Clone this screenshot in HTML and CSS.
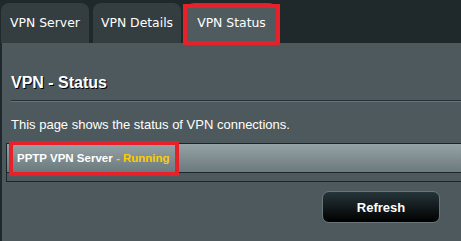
FILE: index.html
```html
<!DOCTYPE html>
<html lang="en">
<head>
    <meta charset="UTF-8">
    <title>VPN Status</title>
    <link rel="stylesheet" href="styles.css">
</head>
<body>
    <div class="tabs">
        <div class="tab">VPN Server</div>
        <div class="tab">VPN Details</div>
        <div class="tab active">VPN Status</div>
    </div>
    <div class="panel">
        <h2 class="title">VPN - Status</h2>
        <div class="divider"></div>
        <p class="desc">This page shows the status of VPN connections.</p>
        <div class="status-table">
            <div class="status-head">
                <span class="status-label">PPTP VPN Server <span class="running">- Running</span></span>
            </div>
            <div class="status-body"></div>
        </div>
        <div class="actions">
            <button class="refresh">Refresh</button>
        </div>
    </div>
</body>
</html>
```

FILE: styles.css
```css
html, body {
    margin: 0;
    height: 100%;
}

body {
    background-color: #1f292c;
    font-family: 'Liberation Sans', Arial, sans-serif;
    color: #fff;
    overflow: hidden;
}

.tabs {
    display: flex;
    gap: 4px;
    padding: 3px 0 0 1px;
    height: 40px;
}

.tab {
    position: relative;
    width: 88px;
    height: 40px;
    line-height: 40px;
    text-align: center;
    border-radius: 8px 8px 0 0;
    background-color: #343e41;
    font-family: 'DejaVu Sans', sans-serif;
    font-size: 12.4px;
    color: #fff;
}

.tab.active {
    width: 91px;
    margin-left: 1px;
    background-color: #4f5b5f;
}

/* red highlight box */
.tab.active::after {
    content: '';
    position: absolute;
    top: 1px;
    left: -3px;
    right: -3px;
    bottom: -2px;
    border: 4px solid #e8202a;
}

.panel {
    background-color: #4d595d;
    border-left: 2px solid #1f292c;
    height: 198px;
}

.title {
    margin: 0;
    padding: 30px 0 0 9px;
    font-size: 16px;
    line-height: 20px;
    font-weight: 700;
    text-shadow: 1px 1px 0 #000;
}

.divider {
    margin: 7px 0 0 9px;
    border-top: 1px solid #263135;
    border-bottom: 1px solid #66747a;
}

.desc {
    margin: 15px 0 0 9px;
    font-size: 13px;
    line-height: 16px;
}

.status-table {
    margin: 10px 0 0 4px;
    border: 1px solid #1c2528;
    border-right: none;
}

.status-head {
    display: flex;
    align-items: center;
    height: 28px;
    padding-left: 6px;
    background: linear-gradient(#95a2a6, #6b7a7e);
    border-bottom: 1px solid #1c2528;
}

.status-label {
    display: inline-block;
    height: 27px;
    line-height: 27px;
    padding: 0 5px 0 4px;
    outline: 4px solid #e8202a;
    font-size: 11.5px;
    font-weight: 700;
}

.running {
    color: #ffcc00;
}

.status-body {
    height: 8px;
}

.actions {
    display: flex;
    justify-content: flex-end;
    padding: 9px 21px 0 0;
}

.refresh {
    width: 118px;
    height: 32px;
    border: 1px solid #68767a;
    border-radius: 7px;
    background: linear-gradient(#263539, #000);
    color: #fff;
    font-family: 'Liberation Sans', Arial, sans-serif;
    font-size: 13px;
    font-weight: 700;
}
```
